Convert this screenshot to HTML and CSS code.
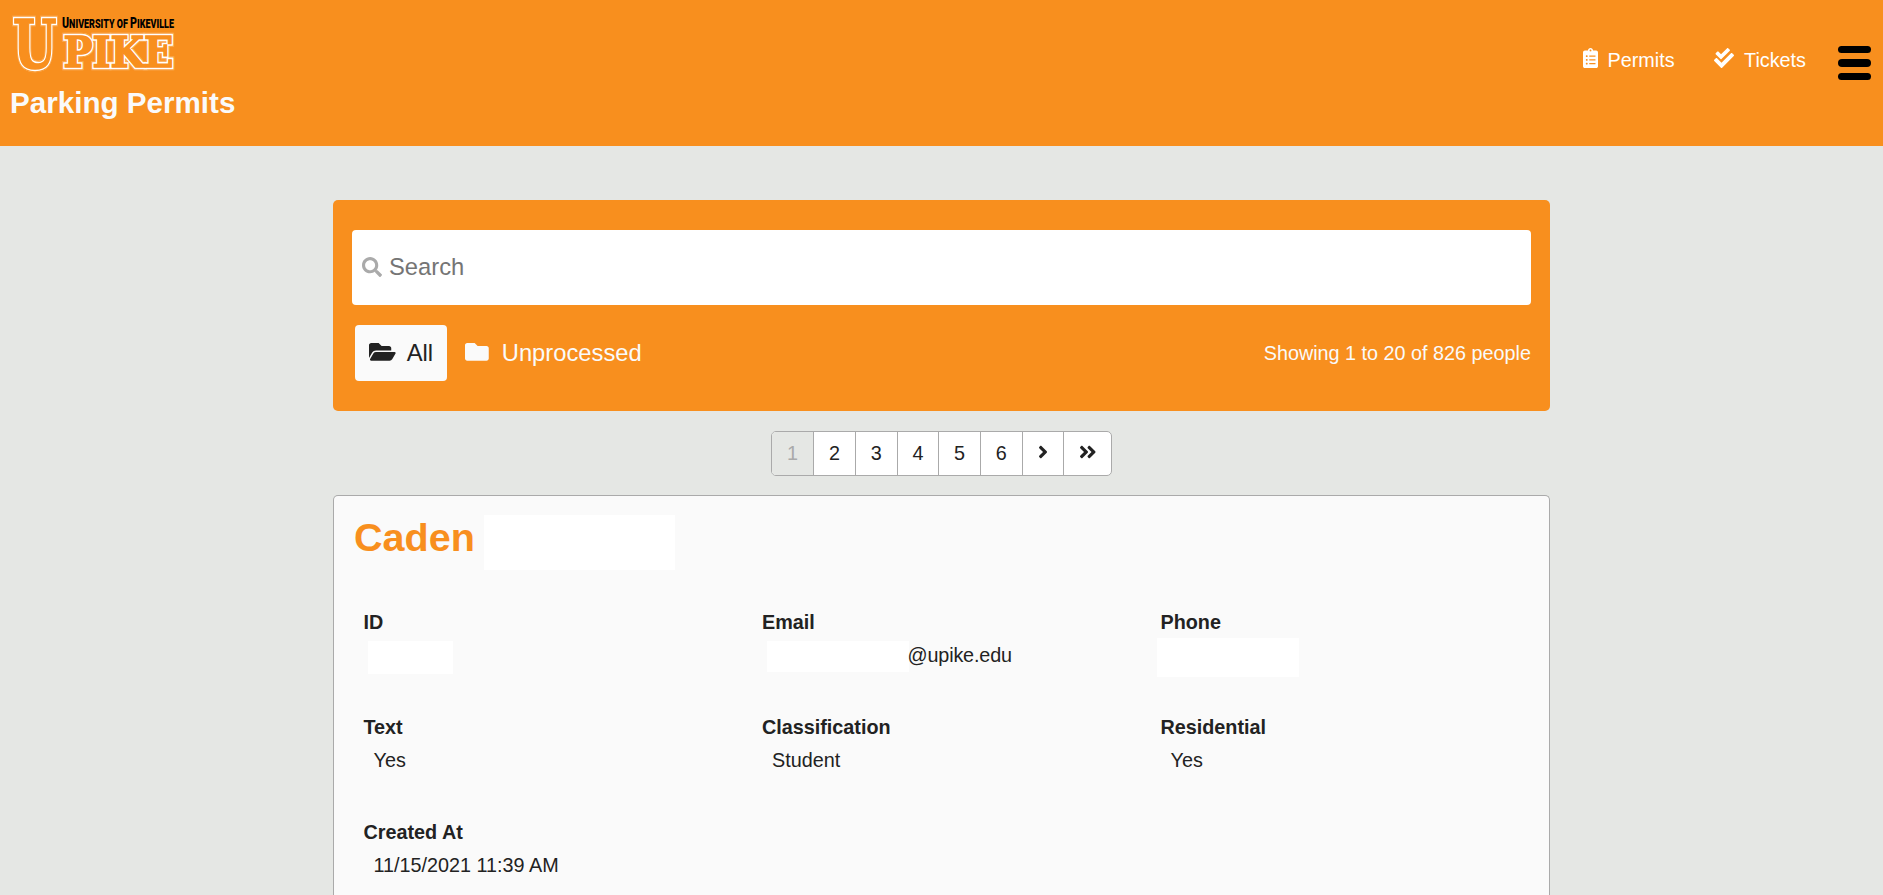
FILE: index.html
```html
<!DOCTYPE html>
<html lang="en">
<head>
<meta charset="utf-8">
<title>Parking Permits</title>
<link rel="stylesheet" href="styles.css">
</head>
<body>
<header class="header">
  <div class="brand">
    <svg class="logo" width="170" height="62" viewBox="0 0 170 62" role="img" aria-label="University of Pikeville">
      <defs>
        <g id="mark">
          <text class="logo-u" x="3" y="55" textLength="43.500" lengthAdjust="spacingAndGlyphs">U</text>
          <text class="logo-pike" x="53.500" y="53.500" textLength="110" lengthAdjust="spacingAndGlyphs">PIKE</text>
        </g>
      </defs>
      <use class="logo-halo" href="#mark"/>
      <use class="logo-gap" href="#mark"/>
      <use class="logo-line" href="#mark"/>
      <use class="logo-fill" href="#mark"/>
      <text class="logo-name" x="52" y="14.500" textLength="112" lengthAdjust="spacingAndGlyphs"><tspan class="cap">U</tspan>NIVERSITY OF <tspan class="cap">P</tspan>IKEVILLE</text>
    </svg>
    <h1 class="title">Parking Permits</h1>
  </div>
  <nav class="nav">
    <a class="nav-link"><svg class="icon-clip" viewBox="0 0 384 512"><path d="M336 64h-80c0-35.300-28.700-64-64-64s-64 28.700-64 64H48C21.500 64 0 85.500 0 112v352c0 26.500 21.500 48 48 48h288c26.500 0 48-21.500 48-48V112c0-26.500-21.500-48-48-48zM96 424c-13.300 0-24-10.700-24-24s10.700-24 24-24 24 10.700 24 24-10.700 24-24 24zm0-96c-13.300 0-24-10.700-24-24s10.700-24 24-24 24 10.700 24 24-10.700 24-24 24zm0-96c-13.300 0-24-10.700-24-24s10.700-24 24-24 24 10.700 24 24-10.700 24-24 24zm96-192c13.300 0 24 10.700 24 24s-10.700 24-24 24-24-10.700-24-24 10.700-24 24-24zm128 368c0 4.400-3.600 8-8 8H168c-4.400 0-8-3.600-8-8v-16c0-4.400 3.600-8 8-8h144c4.400 0 8 3.600 8 8v16zm0-96c0 4.400-3.600 8-8 8H168c-4.400 0-8-3.600-8-8v-16c0-4.400 3.600-8 8-8h144c4.400 0 8 3.600 8 8v16zm0-96c0 4.400-3.600 8-8 8H168c-4.400 0-8-3.600-8-8v-16c0-4.400 3.600-8 8-8h144c4.400 0 8 3.600 8 8v16z"/></svg>Permits</a>
    <a class="nav-link"><svg class="icon-check" viewBox="0 0 512 512"><path d="M505.500 174.800l-39.600-39.600c-8.700-8.700-22.800-8.700-31.500 0L192 377.700 77.600 263.200c-8.700-8.700-22.800-8.700-31.500 0L6.500 302.900c-8.700 8.700-8.700 22.800 0 31.500l171 171.100c8.700 8.700 22.800 8.700 31.500 0l296.500-299.100c8.700-8.700 8.700-22.800 0-31.600z"/><path d="M166.570 282.710c6.840 7.020 18.180 7.020 25.210.180L403.850 72.620c7.020-6.840 7.020-18.180.180-25.210L362.080 5.290c-6.840-7.020-18.180-7.020-25.210-.180L179.710 161.190l-68.230-68.770c-6.840-7.020-18.180-7.020-25.200-.180l-42.130 41.770c-7.020 6.840-7.020 18.180-.180 25.200z"/></svg>Tickets</a>
    <div class="menu"><span></span><span></span><span></span></div>
  </nav>
</header>
<main class="main">
  <section class="panel">
    <div class="search">
      <svg class="icon-search" viewBox="0 0 512 512"><path d="M505 442.700L405.300 343c-4.500-4.500-10.600-7-17-7H372c27.600-35.300 44-79.700 44-128C416 93.100 322.900 0 208 0S0 93.100 0 208s93.100 208 208 208c48.300 0 92.700-16.400 128-44v16.300c0 6.400 2.500 12.500 7 17l99.700 99.700c9.400 9.400 24.600 9.400 33.900 0l28.300-28.300c9.400-9.400 9.400-24.600.1-34zM208 336c-70.700 0-128-57.200-128-128 0-70.700 57.200-128 128-128 70.700 0 128 57.200 128 128 0 70.700-57.200 128-128 128z"/></svg>
      <span class="search-hint">Search</span>
    </div>
    <div class="filters">
      <a class="filter filter-active"><svg class="icon-open" viewBox="0 0 576 512"><path d="M572.694 292.093L500.270 416.248A63.997 63.997 0 0 1 444.989 448H45.025c-18.523 0-30.064-20.093-20.731-36.093l72.424-124.155A64 64 0 0 1 152 256h399.964c18.523 0 30.064 20.093 20.730 36.093zM152 224h328v-48c0-26.510-21.490-48-48-48H272l-64-64H48C21.490 64 0 85.490 0 112v278.046l69.077-118.418C86.214 242.250 117.989 224 152 224z"/></svg>All</a>
      <a class="filter"><svg class="icon-folder" viewBox="0 0 512 512"><path d="M464 128H272l-64-64H48C21.490 64 0 85.490 0 112v288c0 26.510 21.490 48 48 48h416c26.510 0 48-21.490 48-48V176c0-26.510-21.490-48-48-48z"/></svg>Unprocessed</a>
      <span class="count">Showing 1 to 20 of 826 people</span>
    </div>
  </section>
  <nav class="pages">
    <span class="page page-current">1</span>
    <a class="page">2</a>
    <a class="page">3</a>
    <a class="page">4</a>
    <a class="page">5</a>
    <a class="page">6</a>
    <a class="page page-next"><svg width="10" height="20" viewBox="0 0 256 512"><path d="M224.300 273l-136 136c-9.400 9.400-24.600 9.400-33.900 0l-22.600-22.600c-9.400-9.400-9.400-24.600 0-33.900l96.400-96.400-96.400-96.400c-9.400-9.400-9.400-24.600 0-33.900L54.300 103c9.400-9.400 24.600-9.400 33.900 0l136 136c9.500 9.400 9.500 24.600.1 34z"/></svg></a>
    <a class="page page-last"><svg width="17.500" height="20" viewBox="0 0 448 512"><path d="M224.300 273l-136 136c-9.400 9.400-24.600 9.400-33.900 0l-22.600-22.600c-9.400-9.400-9.400-24.600 0-33.900l96.400-96.400-96.400-96.400c-9.400-9.400-9.400-24.600 0-33.900L54.300 103c9.400-9.400 24.600-9.400 33.900 0l136 136c9.500 9.400 9.500 24.600.1 34z"/><path transform="translate(192 0)" d="M224.300 273l-136 136c-9.400 9.400-24.600 9.400-33.900 0l-22.600-22.600c-9.400-9.400-9.400-24.600 0-33.900l96.400-96.400-96.400-96.400c-9.400-9.400-9.400-24.600 0-33.900L54.300 103c9.400-9.400 24.600-9.400 33.900 0l136 136c9.500 9.400 9.500 24.600.1 34z"/></svg></a>
  </nav>
  <article class="card">
    <h2 class="name">Caden <span class="blank blank-name"></span></h2>
    <dl class="fields">
      <div class="field"><dt>ID</dt><dd><span class="blank blank-id"></span></dd></div>
      <div class="field"><dt>Email</dt><dd><span class="blank blank-email"></span><span class="email">@upike.edu</span></dd></div>
      <div class="field"><dt>Phone</dt><dd><span class="blank blank-phone"></span></dd></div>
      <div class="field"><dt>Text</dt><dd>Yes</dd></div>
      <div class="field"><dt>Classification</dt><dd>Student</dd></div>
      <div class="field"><dt>Residential</dt><dd>Yes</dd></div>
      <div class="field"><dt>Created At</dt><dd>11/15/2021 11:39 AM</dd></div>
    </dl>
  </article>
</main>
</body>
</html>
```
FILE: styles.css
```css
* { box-sizing: border-box; }
body {
  margin: 0;
  height: 895px;
  background: #e5e7e4;
  color: #222;
  font: 19.8px/33px "Liberation Sans", Arial, sans-serif;
}
svg { display: block; fill: currentColor; flex: none; }
h1, h2, dl, dd { margin: 0; }

.header {
  display: flex;
  justify-content: space-between;
  height: 146px;
  padding: 13px 12px 0 10px;
  background: #f88f1e;
  color: #fafafa;
}
.title { margin-top: 11px; font-size: 29.6px; line-height: 34px; }
.logo { overflow: visible; }
.logo-u, .logo-pike { font-family: "DejaVu Serif", serif; font-weight: bold; }
.logo-u { font-size: 67px; }
.logo-pike { font-size: 43px; }
.logo-halo { fill: #fbb569; stroke: #fbb569; stroke-width: 6.500; }
.logo-gap { fill: #f88f1e; stroke: #f88f1e; stroke-width: 5.500; }
.logo-line { fill: #fff; stroke: #fff; stroke-width: 4.500; }
.logo-fill { fill: #f88f1e; stroke: #f88f1e; stroke-width: 1.400; }
.logo-name { font-family: Roboto, sans-serif; font-weight: 900; font-size: 13px; fill: #000; }
.cap { font-size: 15.500px; }

.nav { display: flex; align-items: flex-start; color: #fff; }
.nav-link { display: flex; align-items: center; margin-top: 31px; line-height: 33px; }
.nav-link + .nav-link { margin-left: 39.500px; }
.icon-clip { width: 15px; height: 20px; margin: -6px 10px 0 0; }
.icon-check { width: 20px; height: 20px; margin: -6px 10px 0 0; }
.menu { display: flex; flex-direction: column; gap: 6px; margin: 33px 0 0 32px; }
.menu span { width: 33px; height: 7.300px; border-radius: 4px; background: #000; }

.main { width: 1217px; margin: 54px auto 0; }
.panel {
  height: 211px;
  padding: 30px 19px 0;
  border-radius: 5px;
  background: #f88f1e;
}
.search {
  display: flex;
  align-items: center;
  gap: 7px;
  height: 75px;
  padding-left: 10px;
  border-radius: 4px;
  background: #fff;
  color: #757575;
  font-size: 23.760px;
}
.search-hint { margin-top: -2px; }
.icon-search { width: 20px; height: 20px; margin-top: -1px; color: #aaa; }
.filters { display: flex; align-items: center; margin-top: 20px; padding-left: 3px; color: #fafafa; }
.filter { display: flex; align-items: center; height: 56px; padding-bottom: 2px; font-size: 23.760px; }
.filter + .filter { margin-left: 18px; }
.filter-active { width: 92px; padding-left: 14px; border-radius: 4px; background: #fafafa; color: #222; }
.icon-open { width: 26.700px; height: 23.760px; margin: -1px 11px 0 0; }
.icon-folder { width: 23.760px; height: 23.760px; margin: -1px 13px 0 0; }
.count { margin-left: auto; }

.pages {
  display: flex;
  width: 341px;
  height: 45px;
  margin: 20px auto 19px;
  border: 1px solid #aaa;
  border-radius: 5px;
  background: #fff;
  overflow: hidden;
}
.page { display: flex; align-items: center; justify-content: center; width: 41.700px; border-left: 1px solid #aaa; }
.page-current { width: 41.200px; border-left: 0; background: #e5e7e4; color: #aaa; }
.page svg { margin-top: -3px; }
.page-next { width: 41px; }
.page-last { flex: 1; }

.card {
  height: 400px;
  padding: 17px 18px 0 20px;
  border: 1px solid #aaa;
  border-bottom: 0;
  border-radius: 5px 5px 0 0;
  background: #fafafa;
}
.name { display: flex; align-items: flex-start; height: 88px; color: #f88f1e; font-size: 39.600px; line-height: 49px; }
.blank { display: inline-block; background: #fff; }
.blank-name { width: 191px; height: 55px; margin: 2px 0 0 9px; }
.fields { display: grid; grid-template-columns: repeat(3, 398.500px); grid-auto-rows: 105px; padding: 5px 0 0 9.500px; height: 288px; overflow: hidden; }
.field dt { height: 33px; font-weight: bold; }
.field dd { display: flex; height: 33px; padding-left: 10px; }
.blank-id { width: 85px; height: 33px; margin: 2px 0 0 -5.500px; }
.blank-email { width: 142px; height: 31px; margin: 2px -1px 0 -5.500px; }
.blank-phone { width: 142px; height: 39px; margin: -1px 0 0 -13.500px; }
.email { letter-spacing: -.15px; }
```
